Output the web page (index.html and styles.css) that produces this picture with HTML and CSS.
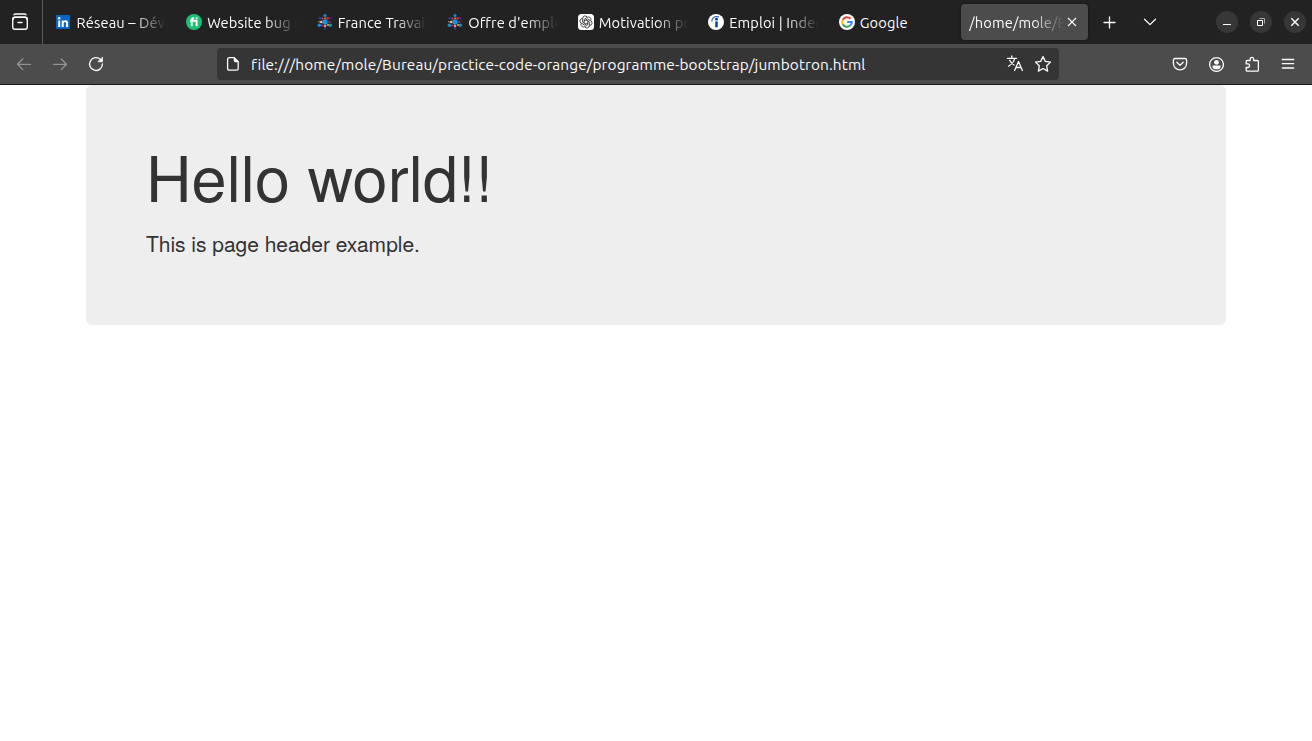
FILE: index.html
```html
<!DOCTYPE html>
<html lang="fr">
<head>
<meta charset="utf-8">
<title>jumbotron</title>
<link rel="stylesheet" href="styles.css">
</head>
<body>
<svg class="defs" width="0" height="0">
  <symbol id="france" viewBox="0 0 16 16">
    <circle cx="8" cy="8" r="2.7" fill="#1495dc"/>
    <circle cx="8" cy="1.600" r="1.5" fill="#168fda"/>
    <circle cx="2.700" cy="4.300" r="1.3" fill="#1c3d9b"/>
    <circle cx="13.200" cy="4.300" r="1.2" fill="#2a3591"/>
    <circle cx="2.300" cy="11.300" r="1.7" fill="#138fd8"/>
    <circle cx="13.300" cy="11.200" r="1.7" fill="#158ed7"/>
    <circle cx="8" cy="14.500" r="1.2" fill="#283991"/>
    <circle cx="5.300" cy="4.600" r="1.1" fill="#d83a50"/>
    <circle cx="10.600" cy="4.400" r="1.3" fill="#e81f38"/>
    <circle cx="8" cy="12" r="1.3" fill="#ef8fa0"/>
    <circle cx="4.200" cy="8" r="1.3" fill="#f3b5bd"/>
    <circle cx="12.200" cy="8" r="1.1" fill="#e3213a"/>
    <circle cx="5" cy="11.500" r="1.1" fill="#d92038"/>
    <circle cx="8" cy="4.300" r=".8" fill="#f1d527"/>
    <circle cx="11" cy="11" r=".9" fill="#f1d527"/>
    <circle cx="2" cy="7.800" r=".7" fill="#e6c52a"/>
    <circle cx="14.400" cy="7.600" r=".8" fill="#23379a"/>
  </symbol>
</svg>
<div class="tabbar">
  <div class="recent">
    <svg width="18" height="18" viewBox="0 0 18 18" fill="none" stroke="#fbfbfe" stroke-width="1.4" stroke-linecap="round"><path d="M3 1.8Q3.4 1 4.4 1h9.2q1 0 1.400.8"/><rect x="1.7" y="4.2" width="14.6" height="12" rx="2.3"/><path d="M1.700 7q.2-2.800 2.300-2.800h10q2.100 0 2.300 2.800M7 9.500h4"/></svg>
  </div>
  <div class="tabs">
    <div class="tab">
      <svg class="favicon" viewBox="0 0 16 16"><rect y="1" width="14" height="14" rx=".8" fill="#0a66c2"/><circle cx="3.2" cy="4.3" r="1.25" fill="#fff"/><path d="M2.200 6.400h2V13h-2zM5.700 6.400h1.900v.9c.4-.7 1.100-1.100 2-1.100 2 0 2.500 1.300 2.500 3.100V13h-2V9.700c0-.9-.1-1.700-1.100-1.700s-1.300.8-1.300 1.700V13h-2z" fill="#fff"/></svg>
      <span class="label">Réseau – Dév</span>
    </div>
    <div class="tab">
      <svg class="favicon" viewBox="0 0 16 16"><circle cx="8" cy="8" r="8" fill="#1dbf73"/><path d="M5.700 12.200V5.900q0-1.700 1.700-1.700h.7M4 6.700h6.600v5.500" fill="none" stroke="#fff" stroke-width="1.900"/><circle cx="10.600" cy="4.300" r="1.050" fill="#fff"/></svg>
      <span class="label">Website bug f</span>
    </div>
    <div class="tab">
      <svg class="favicon"><use href="#france"/></svg>
      <span class="label">France Travail</span>
    </div>
    <div class="tab">
      <svg class="favicon"><use href="#france"/></svg>
      <span class="label">Offre d'emplo</span>
    </div>
    <div class="tab">
      <svg class="favicon" viewBox="0 0 16 16"><rect width="16" height="16" rx="3.500" fill="#fff"/><g fill="none" stroke="#222" stroke-width=".75" stroke-linejoin="round" stroke-linecap="round"><path id="petal" d="M6.200 8.900V5.200L9.400 3.300A2.500 2.500 0 0 1 13 6.300"/><use href="#petal" transform="rotate(60 8 8)"/><use href="#petal" transform="rotate(120 8 8)"/><use href="#petal" transform="rotate(180 8 8)"/><use href="#petal" transform="rotate(240 8 8)"/><use href="#petal" transform="rotate(300 8 8)"/></g></svg>
      <span class="label">Motivation po</span>
    </div>
    <div class="tab">
      <svg class="favicon" viewBox="0 0 16 16"><circle cx="8" cy="8" r="8" fill="#fff"/><path d="M3.700 7.500C4 3.700 7.200 1.600 10.900 3" fill="none" stroke="#2557a7" stroke-width="1.100"/><circle cx="8.500" cy="5.200" r="1.400" fill="#003a9b"/><path d="M7.300 7.300h2.400v6H7.300z" fill="#003a9b"/></svg>
      <span class="label">Emploi | Indee</span>
    </div>
    <div class="tab">
      <svg class="favicon" viewBox="0 0 16 16"><circle cx="8" cy="8" r="8" fill="#fff"/><g fill="none" stroke-width="2"><path d="M11.500 4.700A4.800 4.800 0 0 0 3.800 5.800" stroke="#ea4335"/><path d="M3.800 5.800a4.800 4.800 0 0 0 0 4.400" stroke="#fbbc05"/><path d="M3.800 10.200a4.800 4.800 0 0 0 7.400 1.400" stroke="#34a853"/><path d="M11.200 11.600A4.600 4.600 0 0 0 12.800 8H8.200" stroke="#4285f4"/></g></svg>
      <span class="label full">Google</span>
    </div>
    <div class="tab selected">
      <span class="label">/home/mole/B</span>
      <svg class="close" width="16" height="16" viewBox="0 0 16 16" stroke="#fbfbfe" stroke-width="1.100"><path d="M4 4l8 8M12 4l-8 8"/></svg>
    </div>
  </div>
  <svg class="plus" width="16" height="16" viewBox="0 0 16 16" stroke="#fbfbfe" stroke-width="1.300" stroke-linecap="round"><path d="M7.500 3v11M2 8.500h11"/></svg>
  <svg class="chevron" width="16" height="16" viewBox="0 0 16 16" fill="none" stroke="#fbfbfe" stroke-width="1.300" stroke-linecap="round" stroke-linejoin="round"><path d="M2.500 5.300L8 10.600l5.500-5.300"/></svg>
  <div class="window-buttons">
    <span class="wb"><svg width="16" height="16" viewBox="0 0 16 16"><path d="M4 10.500h8" stroke="#fff"/></svg></span>
    <span class="wb"><svg width="16" height="16" viewBox="0 0 16 16" fill="none"><path d="M6.500 4.500h5v5" stroke="#aaa"/><path d="M4.500 6.500h5v5h-5z" stroke="#fff"/></svg></span>
    <span class="wb"><svg width="16" height="16" viewBox="0 0 16 16"><path d="M4.300 4.300l7.400 7.400M11.700 4.300l-7.400 7.400" stroke="#fff" stroke-width="1.400"/></svg></span>
  </div>
</div>
<div class="toolbar">
  <div class="nav">
    <svg class="off" width="16" height="16" viewBox="0 0 16 16"><path d="M14.500 8.300h-13M6.800 3L1.500 8.300l5.300 5.300"/></svg>
    <svg class="off" width="16" height="16" viewBox="0 0 16 16"><path d="M1.500 8.300h13M9.200 3l5.300 5.300-5.300 5.300"/></svg>
    <svg width="16" height="16" viewBox="0 0 16 16"><path d="M12.600 3.600A6.400 6.400 0 1 0 14.400 8"/><path d="M14.500 1.500v4.200h-4.200z" fill="#fbfbfe" stroke-width=".8"/></svg>
  </div>
  <div class="urlbar">
    <svg width="16" height="16" viewBox="0 0 16 16"><path d="M4.300 1.700h4.900l4 4v6.800q0 1.700-1.700 1.700H4.300q-1.700 0-1.700-1.700V3.400q0-1.700 1.700-1.700z"/><path d="M9 1.500v3q0 1.500 1.500 1.500h3z" fill="#fbfbfe" stroke-width=".5"/></svg>
    <span class="url">file:///home/mole/Bureau/practice-code-orange/programme-bootstrap/jumbotron.html</span>
    <svg class="translate" width="18" height="18" viewBox="0 0 18 18"><path d="M1.500 3.300h9M5.800 1v2.300M2.500 11.200C5.600 9.300 8 6.800 8.600 3.500M3.700 5.300C4.700 7.400 6.200 9 8 10M8.600 15.500l3.900-9 3.900 9M10 12.500h5"/></svg>
    <svg width="18" height="18" viewBox="0 0 18 18"><path d="M9 1.500l2.300 4.900 5.200.7-3.800 3.700.9 5.300L9 13.500l-4.600 2.600.9-5.300L1.500 7.100l5.200-.7z"/></svg>
  </div>
  <div class="actions">
    <svg width="16" height="16" viewBox="0 0 16 16"><path d="M3.200 2.500h9.600q1.800 0 1.800 1.800v3a6.600 6.600 0 0 1-13.200 0v-3q0-1.800 1.800-1.800z"/><path d="M4.800 6.300L8 9.300l3.200-3"/></svg>
    <svg width="16" height="16" viewBox="0 0 16 16"><circle cx="8.500" cy="8.500" r="6.900"/><circle cx="8.500" cy="6.300" r="2.400" fill="#fbfbfe" stroke="none"/><path d="M4.500 9.600h8v1.200a2.400 2.400 0 0 1-2.400 2.400H6.900a2.400 2.400 0 0 1-2.400-2.400z" fill="#fbfbfe" stroke="none"/></svg>
    <svg width="16" height="16" viewBox="0 0 16 16"><path d="M2.200 7V5.500q0-1 1-1h3V3a1.700 1.700 0 0 1 3.400 0v1.500h3.800q1 0 1 1v8.700q0 1-1 1H3.200q-1 0-1-1V11.500h1.600a1.800 1.800 0 0 0 0-3.600H2.200z"/></svg>
    <svg width="16" height="16" viewBox="0 0 16 16"><path d="M2.300 3.500h11.400M2.300 7.700h11.400M2.300 12h11.400"/></svg>
  </div>
</div>
<main class="container">
  <div class="jumbotron">
    <h1>Hello world!!</h1>
    <p>This is page header example.</p>
  </div>
</main>
</body>
</html>
```

FILE: styles.css
```css
* { box-sizing: border-box; }
body {
  margin: 0;
  background: #fff;
  color: #333;
  font-family: "Nimbus Sans", "TeX Gyre Heros", "Liberation Sans", Arial, sans-serif;
  height: 741px;
  overflow: hidden;
}
.defs { position: absolute; }
svg { display: block; flex: none; }

.tabbar {
  display: flex;
  align-items: center;
  height: 44px;
  background: #222;
  color: #fbfbfe;
  font-family: Ubuntu, "Noto Sans", sans-serif;
  font-size: 14.667px;
  letter-spacing: .1px;
}
.recent {
  width: 43px;
  height: 44px;
  padding: 13px 0 0 11px;
  border-right: 1px solid #5a5a5a;
}
.tabs { display: flex; padding-left: 2.600px; }
.tab {
  display: flex;
  align-items: center;
  width: 126.540px;
  height: 36px;
  margin: 0 2px;
  padding: 0 8px;
  border-radius: 4px;
}
.selected {
  background: #4c4c4c;
  box-shadow: 0 0 3px rgba(0, 0, 0, .5);
}
.favicon { width: 16px; height: 16px; margin-right: 5px; }
.label {
  flex: 1;
  min-width: 0;
  overflow: hidden;
  white-space: nowrap;
  padding-top: 1px;
  line-height: 24px;
  mask-image: linear-gradient(to left, transparent, #000 32px);
}
.full { mask-image: none; }
.plus { margin-left: 12px; }
.chevron { margin-left: 24px; }
.window-buttons { display: flex; gap: 12px; margin-left: auto; margin-right: 6px; }
.wb {
  display: grid;
  place-items: center;
  width: 22px;
  height: 22px;
  border-radius: 50%;
  background: #373737;
}

.toolbar {
  display: flex;
  align-items: center;
  height: 41px;
  background: #4c4c4c;
  border-bottom: 1px solid #18161b;
}
.toolbar svg {
  fill: none;
  stroke: #fbfbfe;
  stroke-width: 1.3;
  stroke-linecap: round;
  stroke-linejoin: round;
}
.nav { display: flex; gap: 20px; width: 217px; padding-left: 16px; }
.nav .off { opacity: .4; }
.urlbar {
  display: flex;
  align-items: center;
  width: 842px;
  height: 32px;
  padding: 0 7px 0 8px;
  border-radius: 4px;
  background: #353535;
  color: #fbfbfe;
  font-family: Ubuntu, "Noto Sans", sans-serif;
  font-size: 15.400px;
  letter-spacing: .105px;
}
.url { flex: 1; margin-left: 10px; white-space: nowrap; }
.translate { margin-right: 10px; }
.actions { display: flex; gap: 20px; margin-left: auto; margin-right: 16px; }

.container { width: 1140px; margin: 0 auto; }
.jumbotron {
  height: 240px;
  padding: 48px 60px;
  border-radius: 6px;
  background: #eee;
}
.jumbotron h1 {
  margin: 8px 0 18px;
  font-size: 63px;
  font-weight: 500;
  line-height: 69px;
  letter-spacing: .1px;
}
.jumbotron p {
  margin: 0 0 15px;
  font-size: 21px;
  font-weight: 200;
  line-height: 30px;
  letter-spacing: -.03px;
}
```
